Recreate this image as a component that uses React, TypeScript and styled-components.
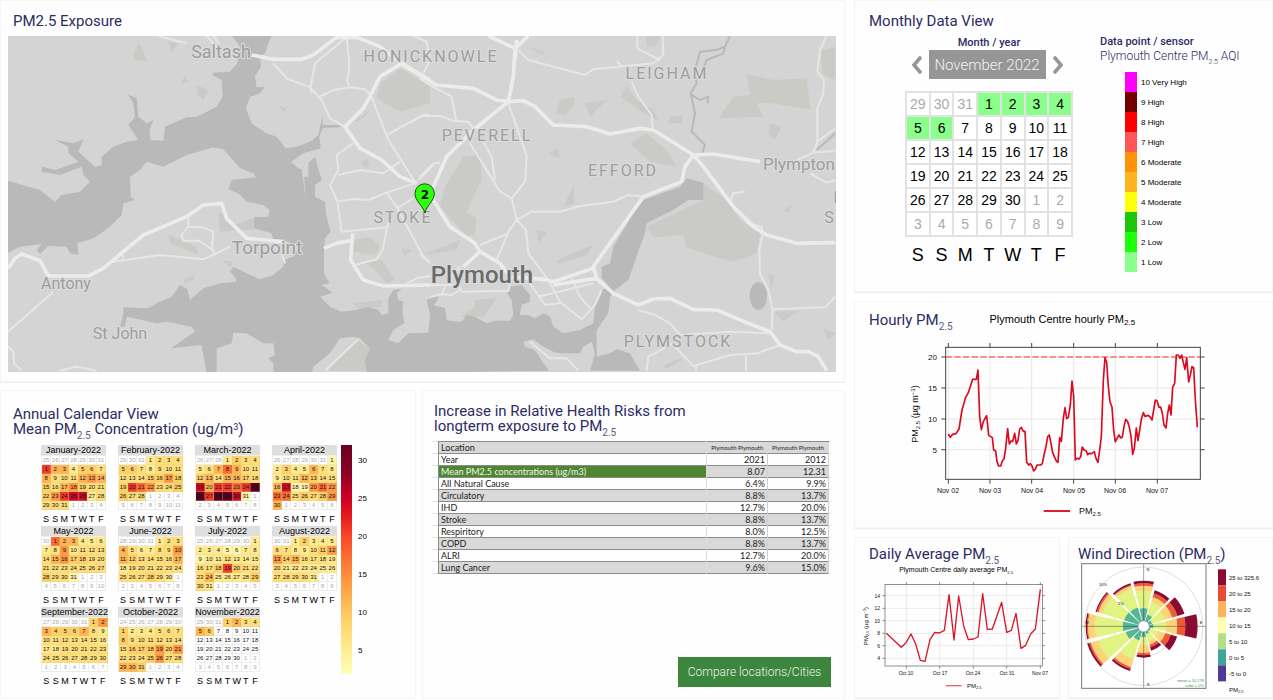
import React from "react";
import styled, { createGlobalStyle, css } from "styled-components";

const navy = "#2d2b63";
const arial = '"Liberation Sans", Arial, sans-serif';
const roboto = 'Roboto, "Liberation Sans", sans-serif';

const GlobalStyle = createGlobalStyle`
  *, *::before, *::after { box-sizing: border-box; }
  body { margin: 0; background: #fff; font-family: ${roboto}; color: #000; }
  h2, h3, p { margin: 0; font-weight: 400; }
  svg { display: block; }
`;

/* ---------- layout ---------- */

const Dashboard = styled.main`
  display: grid;
  grid-template-columns: 843fr 417fr;
  gap: 11px;
  padding: 1px;
`;

const LeftColumn = styled.div`
  display: flex;
  flex-direction: column;
  gap: 10px;
  min-width: 0;
`;

const RightColumn = styled.div`
  display: flex;
  flex-direction: column;
  gap: 11px;
  min-width: 0;
`;

const SplitRow = styled.div<{ $columns: string; $gap: number }>`
  display: grid;
  grid-template-columns: ${(p) => p.$columns};
  gap: ${(p) => p.$gap}px;
`;

const Card = styled.section`
  min-width: 0;
  background: #fefefe;
  box-shadow: 0 0 0 1px #f5f5f5, 0 1px 1px 1px #f0f0f0;
`;

const Title = styled.h2`
  color: ${navy};
  font-size: 15px;
  line-height: 15px;
  white-space: nowrap;
  sub {
    color: #5a5885;
    font-size: 10px;
    line-height: 0;
    vertical-align: -5px;
  }
  sup {
    font-size: 9px;
    line-height: 0;
    vertical-align: 4px;
  }
`;

/* ---------- map ---------- */

const MapCard = styled(Card)`
  padding: 13px 8px 9px 7px;
  ${Title} {
    padding: 0 5px 7px;
  }
`;

const MapSvg = styled.svg`
  width: 100%;
  height: auto;
  background: #d4d4d4;
`;

const PlaceLabel = styled.text<{ $size: number; $strong?: boolean; $district?: boolean }>`
  font-family: ${roboto};
  font-size: ${(p) => p.$size}px;
  font-weight: ${(p) => (p.$strong ? 500 : 400)};
  letter-spacing: ${(p) => (p.$district ? "2px" : "normal")};
  fill: ${(p) => (p.$strong ? "#6b6b6b" : "#9d9d9d")};
  stroke: #dcdcdc;
  stroke-width: 2px;
  paint-order: stroke;
  text-anchor: middle;
`;

const PinLabel = styled.text`
  font: bold 12px "DejaVu Sans", sans-serif;
  text-anchor: middle;
`;

const places = [
  { name: "Saltash", x: 213, y: 22, size: 18 },
  { name: "Torpoint", x: 259, y: 218, size: 19 },
  { name: "Antony", x: 58, y: 253, size: 16 },
  { name: "St John", x: 112, y: 303, size: 16 },
  { name: "Plympton", x: 791, y: 134, size: 17 },
  { name: "Plymouth", x: 474, y: 247, size: 24, strong: true },
  { name: "HONICKNOWLE", x: 423, y: 26, size: 16, district: true },
  { name: "LEIGHAM", x: 659, y: 43, size: 16, district: true },
  { name: "PEVERELL", x: 479, y: 105, size: 16, district: true },
  { name: "EFFORD", x: 615, y: 140, size: 16, district: true },
  { name: "STOKE", x: 395, y: 187, size: 16, district: true },
  { name: "PLYMSTOCK", x: 670, y: 311, size: 16, district: true },
  { name: "F", x: 831, y: 167, size: 16, district: true },
  { name: "S", x: 822, y: 187, size: 16, district: true },
];

const water =
  "M697,108L815,108L805,130L795,160L780,170L783,200L765,228L770,262L795,260L780,280L750,290L738,325L755,370L800,400L830,410L857,445L890,440L930,425L955,405L967,350L968,375L1018,375L1018,382L968,384L958,410L962,445L910,460L873,485L895,505L905,508L918,600L912,530L924,530L934,600L925,540L925,490L945,470L965,540L945,555L945,590L975,605L978,640L985,670L992,695L975,715L972,750L972,820L988,850L965,855L998,878L960,890L990,920L1025,935L1065,930L1105,920L1135,930L1145,945L1165,940L1165,895L1180,870L1205,866L1190,880L1195,900L1210,905L1207,930L1213,970L1180,990L1165,1020L1195,1030L1225,1000L1285,998L1290,945L1280,900L1315,888L1310,905L1300,915L1320,920L1335,925L1340,960L1370,965L1385,965L1400,945L1425,950L1460,970L1485,962L1530,962L1540,945L1535,900L1522,880L1530,860L1565,855L1590,885L1590,905L1565,915L1560,945L1585,945L1605,955L1630,940L1650,950L1660,980L1690,1000L1740,990L1780,970L1785,920L1805,870L1830,862L1805,835L1805,800L1830,790L1840,740L1900,640L1930,600L2040,560L2060,535L2110,548L2110,600L2065,600L2020,630L1940,670L1935,700L1920,740L1885,840L1845,870L1830,890L1825,940L1790,990L1790,1070L1830,1060L1850,1048L1890,1060L1920,1112L1770,1112L1785,1060L1775,1025L1750,1040L1740,1060L1680,1060L1660,1055L1630,1040L1600,1018L1570,1025L1575,1040L1605,1050L1630,1090L1648,1112L1100,1120L1095,1080L1110,1045L1080,1015L1060,1010L1020,1015L990,1060L940,1100L935,1120L820,1120L820,1090L805,1075L825,1065L820,1030L790,1030L740,1000L700,998L695,1030L650,1045L650,1120L620,1120L605,1035L515,1045L555,1015L585,995L575,980L500,965L470,970L380,950L375,980L360,980L370,940L370,922L445,925L470,910L515,890L540,855L562,868L570,900L610,865L660,850L710,845L705,830L690,815L700,800L740,820L780,838L820,825L850,800L850,780L880,770L900,740L850,720L820,720L815,700L762,685L762,652L805,650L808,630L790,615L740,605L715,580L685,568L695,540L768,532L760,520L720,505L670,448L640,442L560,465L490,500L440,485L420,510L390,530L392,590L405,600L370,610L365,645L330,680L295,705L280,715L232,730L235,765L210,760L200,740L145,738L120,762L110,750L125,732L60,740L24,758L24,542L120,570L165,605L185,585L240,575L270,545L250,525L245,500L180,525L125,515L125,500L165,510L235,485L205,460L205,440L165,420L220,430L250,418L235,455L285,500L305,495L305,470L340,440L380,425L415,420L385,375L405,350L400,310L383,283L410,295L415,350L440,370L460,360L448,390L452,420L490,422L495,380L560,352L590,350L650,320L668,290L665,240L637,225L640,218L690,215L712,190L720,140Z";

const parksWest =
  "M1140,250L1200,205L1290,260L1290,310L1200,335L1130,295ZM1060,720L1110,712L1140,740L1125,765L1060,755ZM1095,785L1145,780L1185,840L1160,850L1120,805ZM1060,910L1145,900L1145,920L1070,925ZM505,705L590,740L595,765L510,730ZM655,640L680,640L700,675L760,655L760,690L700,690L660,695ZM590,255L625,270L610,300L595,285ZM400,160L415,130L430,150L440,185L405,180ZM835,315L860,325L850,335ZM550,840L585,825L580,840L555,850ZM1070,1020L1110,1045L1095,1112L985,1112ZM505,125L535,130L515,158ZM542,248L555,227L565,248ZM1055,370L1110,330L1090,355ZM1085,490L1100,475L1110,490L1098,505ZM1205,745L1235,750L1212,770ZM665,780L700,785L690,800Z";

const parksEast =
  "M980,222L1060,240L1160,235L1172,330L1060,310L1010,310L1030,350L895,355L940,290L990,285ZM680,680L850,600L850,550L920,600L960,660L1020,700L1010,760L940,785L850,760L800,740L790,705L700,712ZM130,470L180,465L185,540L160,590L140,640L170,655L165,700L140,710L60,620L75,560ZM420,300L465,290L460,320L435,345L408,340ZM495,310L560,300L510,350ZM630,430L680,400L740,450L770,500L690,485ZM600,290L620,260L650,300L700,330L715,360L690,350ZM410,785L430,770L520,735L500,765L420,790ZM350,690L380,700L355,730ZM120,950L165,920L165,900L230,895L190,950ZM750,350L790,345L785,370L745,370ZM1050,370L1085,380L1065,420L1045,400ZM10,765L120,720L110,750ZM1205,150L1246,140L1246,240L1205,220ZM1062,935L1135,932L1090,965ZM430,620L460,555L465,610ZM385,460L415,445L420,475ZM320,140L375,155L370,165ZM680,108L720,108L705,140L680,138ZM1045,820L1065,825L1055,870ZM725,1100L780,1075L785,1080L745,1105ZM1210,985L1246,1000L1225,1020ZM1090,630L1115,615L1105,640Z";

const majorWest =
  "M755,165L820,178L905,178L940,165L1010,112L1070,112L1140,140L1205,190L1290,240M1205,190L1140,230L1112,285L1090,325L1035,380L1080,445L1145,480L1200,530L1250,550M24,805L45,775L65,762L120,782L145,828L265,828L310,805L430,705L560,650L610,615L665,610L680,655L740,715L850,725M972,745L1015,728L1058,722M1058,700L1052,780L1090,840L1150,858L1290,855";

const minorWest =
  "M820,190L860,235L930,262L965,300L990,355L1035,380M1040,112L945,190L932,262L935,280M1040,112L1048,195L1042,245L1050,262L1000,270L960,290M1050,262L1095,268L1112,285L1165,420L1245,545M1160,405L1270,345L1290,345M1060,430L1010,465L1015,510L990,555L1012,605L1025,695L1160,682M1015,525L1080,510L1150,520L1200,485M1012,605L1060,597L1105,600L1160,578L1245,550M1160,578L1190,620L1270,770L1290,785M1165,665L1148,750L1130,778L1065,795M1190,625L1240,595M565,650L565,680L545,705L550,722L595,722L640,750L640,765L690,740M565,680L610,682L640,695L635,745M660,755L610,778L480,765L340,785M360,755L372,775M24,995L160,875M24,1040L40,1055L42,1090L65,1112M180,1112L230,1100L290,1112M975,1112L1030,1060L1075,1018M475,108L560,130M620,108L650,140M640,108L660,135M1240,108L1280,125L1290,180M1270,220L1290,180M1220,850L1250,835L1290,828M845,760L855,790M1255,540L1300,495";

const majorEast =
  "M-60,190L50,255L160,265L230,300L265,305L310,302L345,320L400,375L500,380L570,402L660,385L700,390L820,465M285,150L280,230L265,305L160,390L80,470L40,560L40,600L90,680L165,730L180,755L130,800M205,108L285,145L325,108M290,120L285,180M820,465L850,500L940,620L1000,680L1040,705L1130,730L1246,728M820,465L795,500L785,545L670,590L520,800L530,835L580,880L655,915L700,897L750,895L820,928L890,930L980,968L1050,995L1080,1035L1130,1055L1165,1055L1195,1070L1220,1112M180,755L240,790L270,830L370,838L400,845L520,805M820,465L880,462L1020,485M400,855L530,835L545,850";

const minorEast =
  "M295,150L325,180L495,225L520,208L700,190L730,165L728,108M652,108L652,145L720,180M590,185L610,200M635,245L655,290L695,345L698,385M0,235L30,255L95,290L108,360M0,348L60,348L100,362L145,365L160,385M265,310L290,380L320,470L315,545L275,595L290,660M265,695L230,780M275,595L240,575L150,430M190,425L215,470L225,540M0,530L40,490L60,488M290,660L335,635L420,635L480,618L580,605L625,585L670,590M290,660L265,695M290,660L318,690L325,760L385,840L420,905L485,958L525,915L545,870M180,735L265,700M330,850L375,915L425,908M355,890L520,850M455,835L480,890L510,925M0,855L115,855L125,875L265,872L275,830M30,890L65,883L95,885L120,870M65,883L80,850L120,800M1220,108L1200,150L1192,215L1212,240L1210,280L1192,325L1192,425L1180,458L1130,480M1180,458L1246,452M1192,425L1246,385M1170,520L1220,548L1246,540M975,575L940,580L930,605M980,668L1025,680L1028,705L1018,750L1020,820L1045,870L1058,930L1055,990M1060,928L1215,922L1246,890M655,930L705,945L750,970L780,1005L930,995L1050,1000M1080,1035L1010,1060L930,1065L820,1098L760,1035M828,1112L828,1098M760,1030L685,1070L680,1112M978,1065L978,1112M330,1025L390,1075L440,1075L475,1112M0,765L30,790";

const river =
  "M930,108L915,140L890,150L840,155L825,210L830,250L812,280L825,340L815,395L855,435L845,465M915,140L910,160L860,180L850,205M815,285L840,300L865,290L862,310M1190,450L1246,400";

function ExposureMap() {
  return (
    <MapSvg viewBox="0 0 828 336" role="img" aria-label="Map of Plymouth">
      <g transform="scale(.333333) translate(-24 -108)" fill="none" strokeLinejoin="round">
        <path d={parksWest} fill="#cacbc7" />
        <path d={parksEast} fill="#cacbc7" transform="translate(1260 0)" />
        <path d={water} fill="#b9b9b9" />
        <ellipse cx="2275" cy="888" rx="26" ry="42" fill="#b9b9b9" />
        <path d={river} stroke="#b9b9b9" strokeWidth="6" transform="translate(1260 0)" />
        <g stroke="#e6e6e6" strokeWidth="6">
          <path d={minorWest} />
          <path d={minorEast} transform="translate(1260 0)" />
        </g>
        <g stroke="#ececec" strokeWidth="11">
          <path d={majorWest} />
          <path d={majorEast} transform="translate(1260 0)" />
        </g>
      </g>
      {places.map((p) => (
        <PlaceLabel key={p.name} x={p.x} y={p.y} $size={p.size} $strong={p.strong} $district={p.district}>
          {p.name}
        </PlaceLabel>
      ))}
      <path
        d="M417 177C415 170 407 165 407 157.500A9.700 9.700 0 0 1 426.400 157.500C426.400 165 418 170 417 177Z"
        fill="#2bff0a"
        stroke="#1b4d12"
        strokeWidth="1"
      />
      <PinLabel x="417" y="163">
        2
      </PinLabel>
    </MapSvg>
  );
}

/* ---------- annual calendar ---------- */

const AnnualCard = styled(Card)`
  padding: 16px 12px 13px;
`;

const AnnualBody = styled.div`
  display: flex;
  align-items: flex-start;
  margin: 8px 0 0 28px;
`;

const MonthGrid = styled.div`
  display: grid;
  grid-template-columns: repeat(4, 65px);
  column-gap: 12px;
  row-gap: 3px;
`;

const MonthTable = styled.table`
  width: 100%;
  table-layout: fixed;
  border-collapse: collapse;
  font: 6px/8px ${arial};
  text-align: center;
  caption {
    height: 10px;
    background: #dedede;
    font-size: 9px;
    line-height: 10px;
    white-space: nowrap;
  }
  tfoot td {
    height: 13px;
    padding: 5px 0 0;
    font-size: 9px;
  }
`;

const ramp: Record<string, string> = {
  "0": "#fff6ae",
  "1": "#feea90",
  "2": "#fedf7c",
  "3": "#fecf66",
  "4": "#feb453",
  "5": "#fd9743",
  "6": "#fb6a35",
  "7": "#f23a2c",
  "8": "#cf0c26",
  "9": "#8a0026",
  a: "#5c0022",
};

const MonthCell = styled.td<{ $level?: string; $outside?: boolean }>`
  height: 9px;
  padding: 0;
  border: 1px solid ${(p) => (p.$level ? "rgba(225, 205, 140, 0.3)" : "#ececec")};
  background: ${(p) => (p.$level ? ramp[p.$level] : "#fff")};
  color: ${(p) => (p.$outside ? "#aaa" : "#111")};
`;

const weekdays = ["S", "S", "M", "T", "W", "T", "F"];

type Month = { name: string; lead: number; leadEnd: number; days: number; levels: string };

/* One colour level per day; each string starts a new calendar row. */
const weeks = (...rows: string[]) => rows.join("");

const months: Month[] = [
  { name: "January", lead: 7, leadEnd: 31, days: 31, levels: weeks("7441332", "4222454", "3245322", "3578812", "222") },
  { name: "February", lead: 3, leadEnd: 31, days: 28, levels: weeks("1222", "3321222", "2223353", "3765223", "322") },
  { name: "March", lead: 3, leadEnd: 28, days: 31, levels: weeks("1322", "1246422", "3424432", "847767a", "a7aa80") },
  { name: "April", lead: 6, leadEnd: 31, days: 30, levels: weeks("0", "1311421", "1224322", "4800565", "6623235", "4") },
  { name: "May", lead: 1, leadEnd: 30, days: 31, levels: weeks("644111", "1251222", "2453322", "2222222", "3220") },
  { name: "June", lead: 4, leadEnd: 31, days: 30, levels: weeks("122", "4211225", "4322224", "1222222", "222321") },
  { name: "July", lead: 6, leadEnd: 30, days: 31, levels: weeks("1", "1110011", "0112111", "2237322", "2411113", "21") },
  { name: "August", lead: 2, leadEnd: 31, days: 31, levels: weeks("13111", "2211235", "5342221", "2111111", "22221") },
  { name: "September", lead: 5, leadEnd: 31, days: 30, levels: weeks("35", "4333421", "2222221", "1122222", "2222222") },
  { name: "October", lead: 7, leadEnd: 30, days: 31, levels: weeks("3111222", "3222222", "2333535", "2223522", "443") },
  { name: "November", lead: 3, leadEnd: 31, days: 30, levels: weeks("3422", "43") },
];

type Day = { label: number; level?: string; outside: boolean };

function monthWeeks(m: Month): Day[][] {
  const days: Day[] = [];
  for (let i = 0; i < 42; i++) {
    const n = i - m.lead + 1;
    if (n < 1) days.push({ label: m.leadEnd + n, outside: true });
    else if (n > m.days) days.push({ label: n - m.days, outside: true });
    else days.push({ label: n, level: m.levels[n - 1], outside: false });
  }
  return [0, 1, 2, 3, 4, 5].map((w) => days.slice(w * 7, w * 7 + 7));
}

const ScaleBar = styled.div`
  width: 11px;
  height: 229px;
  margin-left: 4px;
  background: linear-gradient(
    to bottom,
    #68001f 0,
    #8c0026 12%,
    #c80022 22%,
    #e3101d 29%,
    #fb4629 40%,
    #fd8038 53%,
    #feb04c 66%,
    #fed36c 77%,
    #ffeb8f 89%,
    #ffffb8 100%
  );
`;

const ScaleTicks = styled.ul`
  margin: 0;
  padding: 12px 0 0 6px;
  list-style: none;
  font: 8px/38px ${arial};
  li {
    height: 38px;
    line-height: 8px;
  }
`;

function AnnualCalendar() {
  return (
    <AnnualCard>
      <Title>
        Annual Calendar View
        <br />
        Mean PM<sub>2.5</sub> Concentration (ug/m<sup>3</sup>)
      </Title>
      <AnnualBody>
        <MonthGrid>
          {months.map((m) => (
            <MonthTable key={m.name}>
              <caption>{m.name}-2022</caption>
              <tbody>
                {monthWeeks(m).map((week, w) => (
                  <tr key={w}>
                    {week.map((d, i) => (
                      <MonthCell key={i} $level={d.level} $outside={d.outside}>
                        {d.label}
                      </MonthCell>
                    ))}
                  </tr>
                ))}
              </tbody>
              <tfoot>
                <tr>
                  {weekdays.map((d, i) => (
                    <td key={i}>{d}</td>
                  ))}
                </tr>
              </tfoot>
            </MonthTable>
          ))}
        </MonthGrid>
        <ScaleBar />
        <ScaleTicks>
          {[30, 25, 20, 15, 10, 5].map((t) => (
            <li key={t}>{t}</li>
          ))}
        </ScaleTicks>
      </AnnualBody>
    </AnnualCard>
  );
}

/* ---------- health risks ---------- */

const RiskCard = styled(Card)`
  display: flex;
  flex-direction: column;
  justify-content: space-between;
  padding: 13px 13px 11px 9px;
  ${Title} {
    padding: 0 2px;
  }
`;

const Sheet = styled.div`
  margin-top: 7px;
  padding: 0 2px 0 6px;
  background: repeating-linear-gradient(to bottom, #e6e6e6 0 1px, transparent 1px 12px);
`;

const RiskTable = styled.table`
  width: 100%;
  table-layout: fixed;
  border-collapse: collapse;
  background: #fefefe;
  font: 9px/10px Lato, "Open Sans", sans-serif;
  color: #222;
  th {
    font-weight: 400;
  }
`;

const RiskRow = styled.tr<{ $shaded?: boolean }>`
  height: 12px;
  border-top: 1px solid #8a8a8a;
  border-bottom: 1px solid #8a8a8a;
  background: ${(p) => (p.$shaded ? "#d9d9d9" : "#fefefe")};
`;

const RiskName = styled.th<{ $active?: boolean }>`
  padding: 0 2px;
  text-align: left;
  border-left: 1px solid #8a8a8a;
  border-right: 1px solid #dcdcdc;
  ${(p) =>
    p.$active &&
    css`
      background: #4f8631;
      color: #f2f7ee;
    `}
`;

const RiskValue = styled.td`
  padding: 0 2px;
  text-align: right;
  border-right: 1px solid #cfcfcf;
`;

const SiteName = styled.th`
  padding: 0;
  font-size: 6px;
  text-align: center;
  white-space: nowrap;
`;

const CompareButton = styled.button`
  align-self: flex-end;
  width: 153px;
  height: 30px;
  border: 0;
  background: #3c873d;
  color: #e9f3e9;
  font: 300 12px ${roboto};
  cursor: pointer;
`;

const risks = [
  ["Year", "2021", "2012"],
  ["Mean PM2.5 concentrations (ug/m3)", "8.07", "12.31"],
  ["All Natural Cause", "6.4%", "9.9%"],
  ["Circulatory", "8.8%", "13.7%"],
  ["IHD", "12.7%", "20.0%"],
  ["Stroke", "8.8%", "13.7%"],
  ["Respiritory", "8.0%", "12.5%"],
  ["COPD", "8.8%", "13.7%"],
  ["ALRI", "12.7%", "20.0%"],
  ["Lung Cancer", "9.6%", "15.0%"],
];

function HealthRisks() {
  return (
    <RiskCard>
      <div>
        <Title>
          Increase in Relative Health Risks from
          <br />
          longterm exposure to PM<sub>2.5</sub>
        </Title>
        <Sheet>
          <RiskTable>
            <colgroup>
              <col />
              <col width="61" />
              <col width="61" />
            </colgroup>
            <thead>
              <RiskRow $shaded>
                <RiskName scope="col">Location</RiskName>
                <SiteName scope="col">Plymouth Plymouth</SiteName>
                <SiteName scope="col">Plymouth Plymouth</SiteName>
              </RiskRow>
            </thead>
            <tbody>
              {risks.map(([name, recent, earlier], i) => (
                <RiskRow key={name} $shaded={i % 2 === 1}>
                  <RiskName scope="row" $active={i === 1}>
                    {name}
                  </RiskName>
                  <RiskValue>{recent}</RiskValue>
                  <RiskValue>{earlier}</RiskValue>
                </RiskRow>
              ))}
            </tbody>
          </RiskTable>
        </Sheet>
      </div>
      <CompareButton type="button">Compare locations/Cities</CompareButton>
    </RiskCard>
  );
}

/* ---------- monthly view ---------- */

const MonthlyCard = styled(Card)`
  padding: 13px 14px 18px;
`;

const MonthlyBody = styled.div`
  display: flex;
  align-items: flex-start;
  gap: 27px;
`;

const MonthlyLeft = styled.div`
  display: flex;
  flex-direction: column;
  align-items: center;
  width: 168px;
  margin: 7px 0 0 36px;
`;

const FieldLabel = styled.label`
  color: ${navy};
  font-size: 11px;
  font-weight: 500;
  line-height: 13px;
`;

const MonthPicker = styled.div`
  display: flex;
  align-items: center;
  align-self: flex-start;
  justify-content: space-between;
  width: 154px;
  margin: 1px 0 12px 5px;
`;

const StepButton = styled.button`
  display: flex;
  padding: 0;
  border: 0;
  background: none;
  color: #969696;
  cursor: pointer;
`;

const MonthSelect = styled.select`
  appearance: none;
  width: 117px;
  height: 29px;
  border: 0;
  padding: 0;
  border-radius: 0;
  background: #969696;
  color: #f2f2f2;
  font: 300 15px ${roboto};
  text-align: center;
  text-align-last: center;
`;

const BigTable = styled.table`
  width: 100%;
  table-layout: fixed;
  border-collapse: collapse;
  font: 14px/16px ${arial};
  text-align: center;
  tfoot td {
    height: 37px;
    padding: 0;
    font-size: 18px;
  }
`;

const BigCell = styled.td<{ $marked?: boolean; $outside?: boolean }>`
  height: 24px;
  padding: 0;
  border: 2px solid #e2e2e2;
  background: ${(p) => (p.$marked ? "#8bff8b" : "#fff")};
  color: ${(p) => (p.$outside ? "#aaa" : "#000")};
`;

const SensorPanel = styled.div`
  padding-top: 6px;
  color: ${navy};
  h3 {
    font-size: 11px;
    font-weight: 500;
    line-height: 14px;
  }
  p {
    font-size: 12px;
    font-weight: 300;
    line-height: 14px;
    white-space: nowrap;
  }
  sub {
    font-size: 7px;
    line-height: 0;
    vertical-align: -4px;
  }
`;

const BandList = styled.ul`
  margin: 9px 0 0 25px;
  padding: 0;
  list-style: none;
`;

const Band = styled.li<{ $color: string }>`
  display: flex;
  align-items: center;
  gap: 4px;
  height: 20px;
  color: #000;
  font: 8px ${arial};
  &::before {
    content: "";
    width: 12px;
    height: 20px;
    background: ${(p) => p.$color};
  }
`;

const bands = [
  ["10 Very High", "#ff00ff"],
  ["9 High", "#730000"],
  ["8 High", "#ff0000"],
  ["7 High", "#ff5757"],
  ["6 Moderate", "#ff9306"],
  ["5 Moderate", "#ffb31f"],
  ["4 Moderate", "#ffff0a"],
  ["3 Low", "#1dc60a"],
  ["2 Low", "#1eff0a"],
  ["1 Low", "#8bff8b"],
];

function Chevron({ points }: { points: string }) {
  return (
    <svg width="12" height="20" viewBox="0 0 12 20" fill="none" stroke="currentColor" strokeWidth="3.600" strokeLinecap="round">
      <polyline points={points} />
    </svg>
  );
}

function MonthlyView() {
  return (
    <MonthlyCard>
      <Title>Monthly Data View</Title>
      <MonthlyBody>
        <MonthlyLeft>
          <FieldLabel htmlFor="month">Month / year</FieldLabel>
          <MonthPicker>
            <StepButton type="button" aria-label="Previous month">
              <Chevron points="10,3 4,10 10,17" />
            </StepButton>
            <MonthSelect id="month" defaultValue="November 2022">
              <option>November 2022</option>
            </MonthSelect>
            <StepButton type="button" aria-label="Next month">
              <Chevron points="3,3 9,10 3,17" />
            </StepButton>
          </MonthPicker>
          <BigTable>
            <tbody>
              {monthWeeks(months[10]).map((week, w) => (
                <tr key={w}>
                  {week.map((d, i) => (
                    <BigCell key={i} $marked={!!d.level} $outside={d.outside}>
                      {d.label}
                    </BigCell>
                  ))}
                </tr>
              ))}
            </tbody>
            <tfoot>
              <tr>
                {weekdays.map((d, i) => (
                  <td key={i}>{d}</td>
                ))}
              </tr>
            </tfoot>
          </BigTable>
        </MonthlyLeft>
        <SensorPanel>
          <h3>Data point / sensor</h3>
          <p>
            Plymouth Centre PM<sub>2.5</sub> AQI
          </p>
          <BandList>
            {bands.map(([label, color]) => (
              <Band key={label} $color={color}>
                {label}
              </Band>
            ))}
          </BandList>
        </SensorPanel>
      </MonthlyBody>
    </MonthlyCard>
  );
}

/* ---------- charts ---------- */

const ChartSvg = styled.svg`
  width: 100%;
  height: auto;
`;

const ChartText = styled.text<{ $size: number; $anchor?: string }>`
  font-family: ${arial};
  font-size: ${(p) => p.$size}px;
  text-anchor: ${(p) => p.$anchor ?? "middle"};
  fill: #111;
`;

const ChartTitle = styled.h3<{ $size: number }>`
  font: ${(p) => p.$size}px ${arial};
  white-space: nowrap;
  sub {
    font-size: ${(p) => p.$size - 3}px;
    line-height: 0;
    vertical-align: -2px;
  }
`;

const HourlyHead = styled.header`
  display: flex;
  align-items: flex-start;
  gap: 37px;
  padding: 11px 14px 12px;
`;

const hourly =
  "295,402 301,412 308,403 318,401 327,387 336,330 347,292 355,278 368,238 379,238 384,210 389,350 394,389 400,365 410,347 416,406 427,413 431,450 437,453 441,485 446,498 452,498 457,483 462,477 467,445 473,386 478,432 483,423 488,424 494,400 499,432 504,421 509,387 514,382 520,394 525,394 530,487 536,495 541,491 546,498 551,513 556,508 561,495 572,495 577,491 582,465 588,440 593,410 598,405 603,430 608,458 614,472 619,483 624,487 629,413 634,424 640,355 645,323 650,356 655,352 661,315 666,243 671,288 676,480 681,475 687,477 692,470 697,441 702,450 708,452 713,464 718,460 725,461 733,455 738,475 744,487 749,450 754,410 760,240 765,173 770,187 775,260 780,305 786,322 791,390 796,426 801,415 807,405 812,414 817,411 822,380 827,358 833,365 838,382 843,408 848,463 853,445 859,384 864,422 869,390 874,358 880,338 885,349 895,346 901,352 906,360 911,330 916,300 921,302 927,322 932,321 937,340 942,375 948,384 953,340 958,315 963,345 968,262 974,250 979,165 985,165 990,175 995,165 1000,188 1005,208 1010,173 1016,246 1021,225 1026,200 1031,203 1036,300 1042,382";

const daily =
  "109,313 154,355 168,341 183,315 197,345 211,394 225,397 240,332 254,310 268,312 283,304 297,197 312,333 326,201 341,291 355,332 370,330 384,324 398,194 412,301 427,300 441,260 455,220 470,310 484,304 498,253 513,358 527,349 542,315 556,300 571,181";

function HourlyChart() {
  const ys = [
    [20, 171],
    [15, 264],
    [10, 357],
    [5, 449],
  ];
  const xs = [295, 420, 545, 671, 796, 922];
  return (
    <ChartSvg viewBox="0 0 417 187" role="img" aria-label="Hourly PM2.5 line chart">
      <g transform="scale(.333333) translate(-15 -120)" fill="none">
        <g stroke="#e8e8e8" strokeWidth="3">
          {ys.map(([t, y]) => (
            <path key={t} d={`M287,${y}H1051`} />
          ))}
          {xs.map((x) => (
            <path key={x} d={`M${x},142V538`} />
          ))}
        </g>
        <path d="M287,171H1051" stroke="#ff6b6b" strokeWidth="4" strokeDasharray="19 7" />
        <polyline points={hourly} stroke="#dc0a20" strokeWidth="5" strokeLinejoin="round" />
        <g stroke="#444" strokeWidth="3">
          <rect x="287" y="142" width="764" height="396" />
          {ys.map(([t, y]) => (
            <path key={t} d={`M274,${y}H287M1051,${y}H1064`} />
          ))}
          {xs.map((x) => (
            <path key={x} d={`M${x},129V142M${x},538V551`} />
          ))}
        </g>
        <path d="M581,633H660" stroke="#dc2030" strokeWidth="6" />
      </g>
      {ys.map(([t, y]) => (
        <ChartText key={t} x="82" y={Math.round(y / 3) - 37} $size={8} $anchor="end">
          {t}
        </ChartText>
      ))}
      {xs.map((x, i) => (
        <ChartText key={x} x={Math.round(x / 3) - 5} y="153" $size={7}>
          Nov 0{i + 2}
        </ChartText>
      ))}
      <ChartText transform="translate(63 74) rotate(-90)" $size={9}>
        PM
        <tspan fontSize="6" dy="2">
          2.5
        </tspan>
        <tspan dy="-2"> (µg m</tspan>
        <tspan fontSize="6" dy="-3">
          −3
        </tspan>
        <tspan dy="3">)</tspan>
      </ChartText>
      <ChartText x="224" y="174" $size={9} $anchor="start">
        PM
        <tspan fontSize="6" dy="2">
          2.5
        </tspan>
      </ChartText>
    </ChartSvg>
  );
}

const SmallHead = styled.header<{ $inset: number }>`
  padding: 9px 0 0 ${(p) => p.$inset}px;
  ${ChartTitle} {
    margin: 4px 0 0;
    padding-right: 16px;
    text-align: center;
    line-height: 8px;
  }
`;

function DailyChart() {
  const ys = [
    [14, 200],
    [12, 238],
    [10, 275],
    [8, 313],
    [6, 350],
    [4, 388],
  ];
  const xs: [string, number][] = [
    ["Oct 10", 169],
    ["Oct 17", 269],
    ["Oct 24", 370],
    ["Oct 31", 470],
    ["Nov 07", 571],
  ];
  return (
    <ChartSvg viewBox="0 0 204 122" role="img" aria-label="Daily average PM2.5 line chart">
      <g transform="scale(.333333) translate(-15 -135)" fill="none">
        <g stroke="#ebebeb" strokeWidth="3">
          {ys.map(([t, y]) => (
            <path key={t} d={`M105,${y}H577`} />
          ))}
          {xs.map(([t, x]) => (
            <path key={t} d={`M${x},167V411`} />
          ))}
        </g>
        <polyline points={daily} stroke="#dc1428" strokeWidth="4" strokeLinejoin="round" />
        <g stroke="#5a5a5a" strokeWidth="2">
          <rect x="105" y="167" width="472" height="244" />
          {ys.map(([t, y]) => (
            <path key={t} d={`M97,${y}H105M577,${y}H585`} />
          ))}
          {xs.map(([t, x]) => (
            <path key={t} d={`M${x},159V167M${x},411V419`} />
          ))}
        </g>
        <path d="M287,470H335" stroke="#f0606c" strokeWidth="4" />
      </g>
      {ys.map(([t, y]) => (
        <ChartText key={t} x="25" y={Math.round(y / 3) - 43} $size={5} $anchor="end">
          {t}
        </ChartText>
      ))}
      {xs.map(([t, x]) => (
        <ChartText key={t} x={Math.round(x / 3) - 5} y="101" $size={5}>
          {t}
        </ChartText>
      ))}
      <ChartText transform="translate(13 52) rotate(-90)" $size={6}>
        PM
        <tspan fontSize="4" dy="1">
          2.5
        </tspan>
        <tspan dy="-1"> (µg m</tspan>
        <tspan fontSize="4" dy="-2">
          −3
        </tspan>
        <tspan dy="2">)</tspan>
      </ChartText>
      <ChartText x="112" y="114" $size={6} $anchor="start">
        PM
        <tspan fontSize="4" dy="1">
          2.5
        </tspan>
      </ChartText>
    </ChartSvg>
  );
}

/* Outer radius of each concentration band, for every 30° sector clockwise from north. */
const sectors = [
  [55, 107, 122, 129, 137],
  [38, 77, 92, 103, 113],
  [27, 65, 90, 106, 128],
  [30, 67, 101, 125, 162],
  [22, 45, 68, 85, 105],
  [25, 48, 58, 66, 77],
  [33, 55, 80, 87, 94],
  [45, 102, 128, 134, 140],
  [57, 142, 166, 171, 177],
  [63, 145, 167, 170, 174],
  [62, 128, 142, 147, 151],
  [60, 118, 127, 130, 135],
];
const bandFills = ["#57b794", "#e0f383", "#fdd477", "#ee5a32", "#8c0a32"];

function wedge(angle: number, inner: number, outer: number) {
  const a = ((angle - 13) * Math.PI) / 180;
  const b = ((angle + 13) * Math.PI) / 180;
  const at = (r: number, t: number) => `${(251 + r * Math.sin(t)).toFixed(1)},${(289 - r * Math.cos(t)).toFixed(1)}`;
  return `M${at(inner, a)}L${at(outer, a)}A${outer},${outer} 0 0 1 ${at(outer, b)}L${at(inner, b)}A${inner},${inner} 0 0 0 ${at(inner, a)}Z`;
}

const windBands = [
  ["25 to 325.6", "#8c0a32"],
  ["20 to 25", "#e54e34"],
  ["15 to 20", "#fbb25c"],
  ["10 to 15", "#ffffae"],
  ["5 to 10", "#b2df87"],
  ["0 to 5", "#43a39a"],
  ["-5 to 0", "#4d3a96"],
];

const WindNote = styled(ChartText)`
  fill: #3fa03f;
`;

function WindRose() {
  return (
    <ChartSvg viewBox="0 0 203 135" role="img" aria-label="Wind rose">
      <g transform="scale(.333333) translate(-27 -96)">
        <rect x="65" y="101" width="373" height="374" fill="#fff" stroke="#777" strokeWidth="3" />
        <circle cx="251" cy="289" r="178" fill="none" stroke="#dedede" strokeWidth="3" />
        <circle cx="251" cy="289" r="90" fill="none" stroke="#dedede" strokeWidth="3" />
        {sectors.map((radii, s) =>
          radii.map((r, i) => (
            <path key={`${s}-${i}`} d={wedge(s * 30, i ? radii[i - 1] : 17, r)} fill={bandFills[i]} />
          ))
        )}
        <path d="M251,103V473M67,289H436" stroke="#333" strokeOpacity=".7" strokeWidth="2" />
        <circle cx="251" cy="289" r="17" fill="#fff" stroke="#6d68a8" strokeWidth="2" />
        {windBands.map(([label, color], i) => (
          <rect key={label} x="474" y={118 + i * 48} width="24" height="48" fill={color} />
        ))}
      </g>
      <ChartText x="79" y="9" $size={4}>N</ChartText>
      <ChartText x="132" y="62" $size={4}>E</ChartText>
      <ChartText x="79" y="124" $size={4}>S</ChartText>
      <ChartText x="18" y="62" $size={4}>W</ChartText>
      <ChartText x="34" y="24" $size={4}>10%</ChartText>
      <ChartText x="52" y="43" $size={4}>5%</ChartText>
      <WindNote x="135" y="120" $size={4} $anchor="end">mean = 10.178</WindNote>
      <WindNote x="135" y="125" $size={4} $anchor="end">calm = 0%</WindNote>
      {windBands.map(([label], i) => (
        <ChartText key={label} x="160" y={18 + i * 16} $size={6} $anchor="start">
          {label}
        </ChartText>
      ))}
      <ChartText x="160" y="130" $size={6} $anchor="start">
        PM
        <tspan fontSize="4" dy="1">
          2.5
        </tspan>
      </ChartText>
    </ChartSvg>
  );
}

export default function App() {
  return (
    <>
      <GlobalStyle />
      <Dashboard>
        <LeftColumn>
          <MapCard>
            <Title>PM2.5 Exposure</Title>
            <ExposureMap />
          </MapCard>
          <SplitRow $columns="414fr 421fr" $gap={8}>
            <AnnualCalendar />
            <HealthRisks />
          </SplitRow>
        </LeftColumn>
        <RightColumn>
          <MonthlyView />
          <Card>
            <HourlyHead>
              <Title>
                Hourly PM<sub>2.5</sub>
              </Title>
              <ChartTitle $size={11}>
                Plymouth Centre hourly PM<sub>2.5</sub>
              </ChartTitle>
            </HourlyHead>
            <HourlyChart />
          </Card>
          <SplitRow $columns="204fr 203fr" $gap={10}>
            <Card>
              <SmallHead $inset={14}>
                <Title>
                  Daily Average PM<sub>2.5</sub>
                </Title>
                <ChartTitle $size={7}>
                  Plymouth Centre daily average PM<sub>2.5</sub>
                </ChartTitle>
              </SmallHead>
              <DailyChart />
            </Card>
            <Card>
              <SmallHead $inset={9}>
                <Title>
                  Wind Direction (PM<sub>2.5</sub>)
                </Title>
              </SmallHead>
              <WindRose />
            </Card>
          </SplitRow>
        </RightColumn>
      </Dashboard>
    </>
  );
}
